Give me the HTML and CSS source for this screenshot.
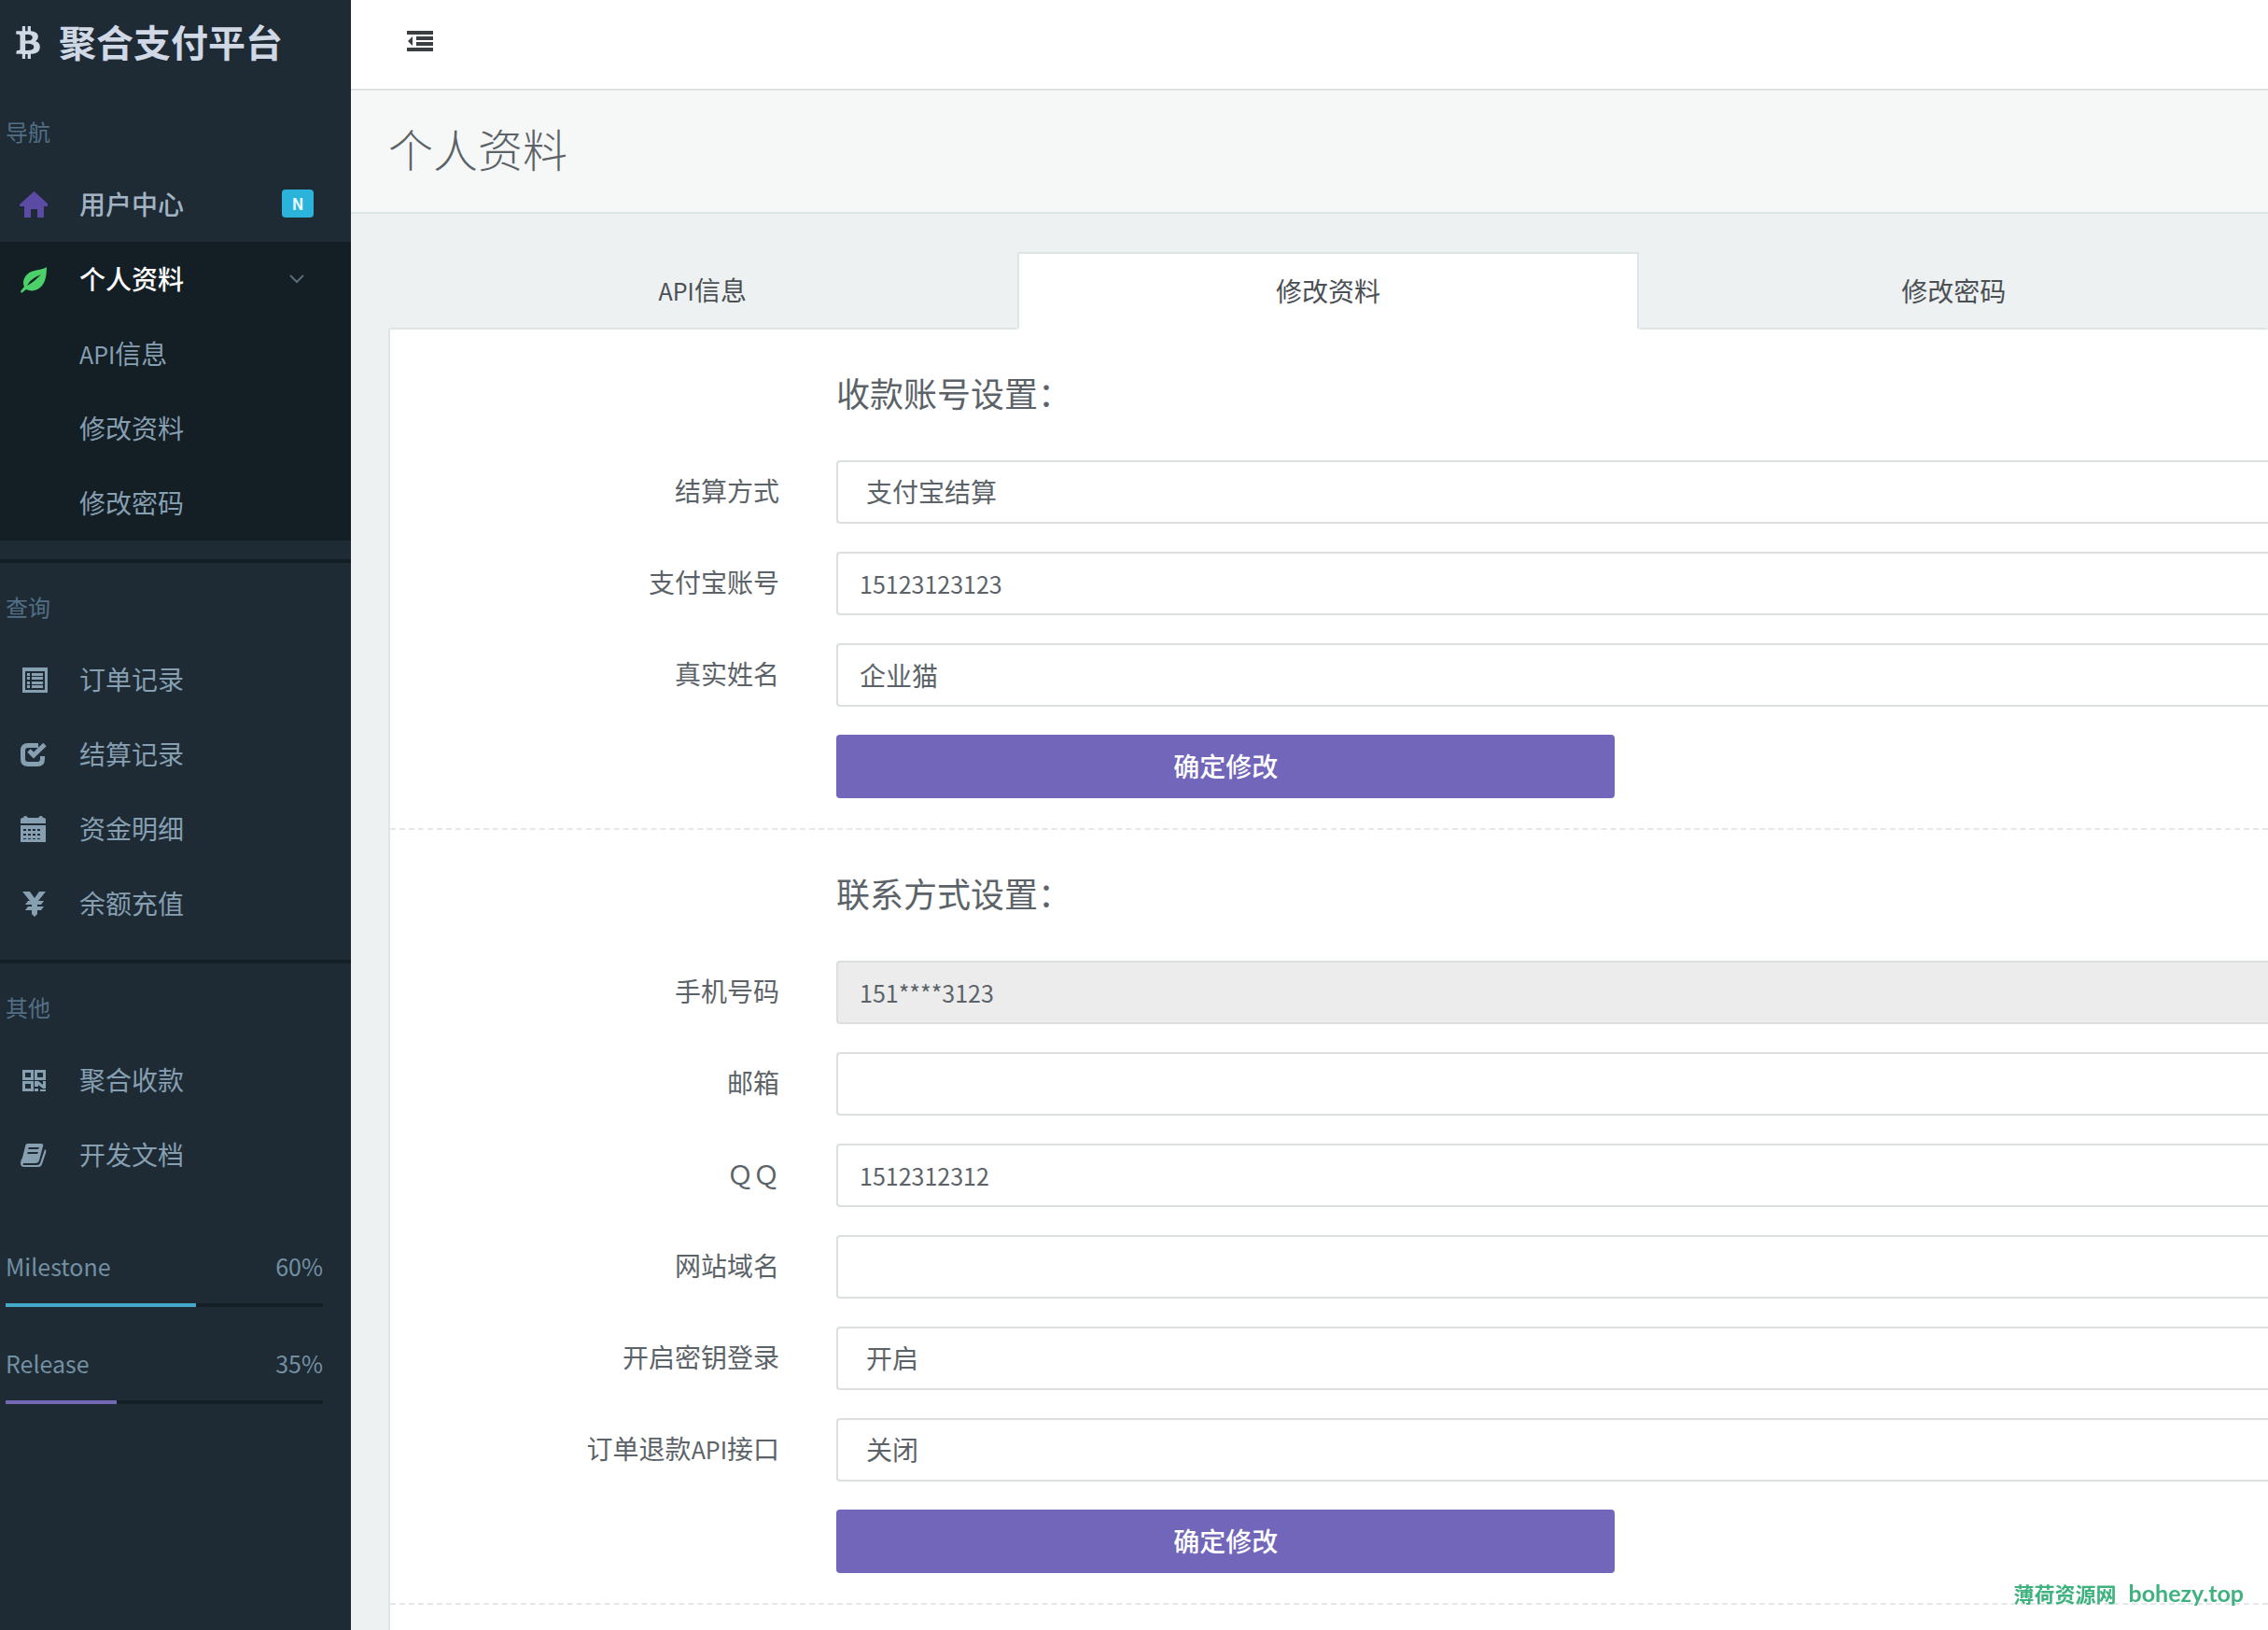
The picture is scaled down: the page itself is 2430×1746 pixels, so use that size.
FILE: index.html
```html
<!DOCTYPE html>
<html lang="zh-CN">
<head>
<meta charset="utf-8">
<title>聚合支付平台 - 个人资料</title>
<link rel="stylesheet" href="styles.css">
</head>
<body>
<div class="app">
  <aside class="sidebar">
    <a class="brand" href="#">
      <svg class="brand-icon" viewBox="224 0 1232 1792" aria-hidden="true"><path d="M1351 651q18 182-131 258 117 28 175 103t45 214q-7 71-32.500 125t-64.500 89-97 58.500-121.500 34.500-145.500 15v255h-154v-251q-80 0-122-1v252h-154v-255q-18 0-54-.5t-55-.5h-200l31-183h111q50 0 58-51v-402h16q-6-1-16-1v-287q-13-68-89-68h-111v-164l212 1q64 0 97-1v-252h154v247q82-2 122-2v-245h154v252q79 7 140 22.500t113 45 82.500 78 36.500 114.500zm-215 545q0-36-15-64t-37-46-57.500-30.500-65.500-18.500-74-9-69-3-64.500 1-47.500 1v338q8 0 37 .5t48 .5 53-1.500 58.500-4 57-8.500 55.500-14 47.500-21 39.500-30 24.500-40 9.500-51zm-71-476q0-33-12.500-58.500t-30.500-42-48-28-55-16.500-61.500-8-58-2.500-54 1-39.500.5v307q5 0 34.500.5t46.500 0 50-2 55-5.500 51.500-11 48.500-18.500 37-27 27-38.500 9-51z"/></svg>
      <span>聚合支付平台</span>
    </a>
    <nav class="nav">
      <h2 class="nav-heading">导航</h2>
      <ul class="nav-list">
        <li><a class="nav-link strong" href="#">
          <svg class="nav-icon home" viewBox="0 0 30 30" aria-hidden="true"><path d="M15.500 0 0 14v2h5v12h7v-9h7v9h7V16h5v-2z"/></svg>
          <span>用户中心</span><b class="badge">N</b></a></li>
        <li class="open">
          <a class="nav-link strong" href="#">
            <svg class="nav-icon leaf" viewBox="0 0 30 30" aria-hidden="true"><path d="M29 1C24 5 14 3 8 9c-4 4-5 9-3 13L1 27l1 2 5-4c6 3 13 1 17-4 4-5 5-12 5-20zM8 21C11 15 16 12 23 9c-5 5-9 9-15 12z"/></svg>
            <span>个人资料</span>
            <svg class="chevron" viewBox="0 0 18 18" aria-hidden="true"><path d="m2 5 7 7 7-7"/></svg>
          </a>
          <ul class="nav-list">
            <li><a class="nav-link sub" href="#"><span><span class="latin">API</span>信息</span></a></li>
            <li><a class="nav-link sub" href="#">修改资料</a></li>
            <li><a class="nav-link sub" href="#">修改密码</a></li>
          </ul>
        </li>
      </ul>
      <hr class="nav-rule">
      <h2 class="nav-heading">查询</h2>
      <ul class="nav-list">
        <li><a class="nav-link" href="#">
          <svg class="nav-icon" viewBox="0 0 30 30" aria-hidden="true"><path fill-rule="evenodd" d="M3 1h27v27H3zM6 5v20h21V5z"/><path d="M8 7h3v3H8zm5 0h12v3H13zM8 11h3v3H8zm5 0h12v3H13zM8 16h3v3H8zm5 0h12v3H13zM8 20h3v3H8zm5 0h12v3H13z"/></svg>
          <span>订单记录</span></a></li>
        <li><a class="nav-link" href="#">
          <svg class="nav-icon" viewBox="0 0 30 30" aria-hidden="true"><g fill="none" stroke="currentColor"><path stroke-width="5" d="M20 4.500H9Q3.500 4.500 3.500 10v9q0 5.500 5.500 5.500h10q5.500 0 5.500-5.500v-3"/><path stroke-width="5" d="m10 10 5 5L27 3.500"/></g></svg>
          <span>结算记录</span></a></li>
        <li><a class="nav-link" href="#">
          <svg class="nav-icon" viewBox="0 0 30 30" aria-hidden="true"><path d="M1 8V4q0-2 2-2h1q0-2 2-2t3 2h11q1-2 3-2t2 2h1q2 0 2 2v4z"/><path fill-rule="evenodd" d="M1 10h27v18H1zM4 14v2h3v-2zm5 0v2h3v-2zm5 0v2h3v-2zm5 0v2h3v-2zM4 19v2h3v-2zm5 0v2h3v-2zm5 0v2h3v-2zm5 0v2h3v-2zM4 24v1h3v-1zm5 0v1h3v-1zm5 0v1h3v-1zm5 0v1h3v-1z"/></svg>
          <span>资金明细</span></a></li>
        <li><a class="nav-link" href="#">
          <svg class="nav-icon" viewBox="0 0 30 30" aria-hidden="true"><path d="M3 1h8l5 7 5-7h7l-8 10h6l-3 4h-4v2h7l-3 4h-4v4l-3 3-3-3v-4H6l3-4h4v-2H6l3-4h2z"/></svg>
          <span>余额充值</span></a></li>
      </ul>
      <hr class="nav-rule">
      <h2 class="nav-heading">其他</h2>
      <ul class="nav-list">
        <li><a class="nav-link" href="#">
          <svg class="nav-icon" viewBox="0 0 30 30" aria-hidden="true"><path fill-rule="evenodd" d="M3 3h12v11H3zM6 6v5h6V6zM16 3h12v11H16zM19 6v5h6V6zM3 15h12v11H3zM6 18v5h6v-5z"/><path d="M16 15h4l5 4v-4h3v8h-3l-5-4v2h-4zM16 23h4v3h-4zM22 24h6v2h-6z"/></svg>
          <span>聚合收款</span></a></li>
        <li><a class="nav-link" href="#">
          <svg class="nav-icon" viewBox="0 0 30 30" aria-hidden="true"><path fill-rule="evenodd" d="M8 2h15q3 0 2 3l-4 15q-1 3-4 3H4q-1 2 1 2h14q2 0 3-2l5-15q2 1 1 4l-4 12q-1 3-4 3H5q-4 0-4-4 0-3 2-6L6 5q0-2 2-3zm2 4-1 2h11l1-2zM9 11l-1 2h11l1-2z"/></svg>
          <span>开发文档</span></a></li>
      </ul>
    </nav>
    <div class="meters">
      <div class="meter">
        <div class="meter-label"><span>Milestone</span><span>60%</span></div>
        <div class="meter-track"><div class="meter-fill info" style="width:60%"></div></div>
      </div>
      <div class="meter">
        <div class="meter-label"><span>Release</span><span>35%</span></div>
        <div class="meter-track"><div class="meter-fill primary" style="width:35%"></div></div>
      </div>
    </div>
  </aside>

  <main class="main">
    <header class="topbar">
      <button class="toggle" type="button" aria-label="收起菜单">
        <svg viewBox="0 0 28 24" aria-hidden="true"><path d="M0 1h28v4H0zM10 7h18v4H10zM10 13h18v4H10zM0 19h28v4H0zM1 12l5-5v10z"/></svg>
      </button>
    </header>
    <div class="page-title"><h1>个人资料</h1></div>
    <div class="content">
      <nav class="tabs">
        <a class="tab" href="#"><span><span class="latin">API</span>信息</span></a>
        <a class="tab active" href="#">修改资料</a>
        <a class="tab" href="#">修改密码</a>
      </nav>
      <div class="panel">
        <form class="section">
          <h2 class="section-title">收款账号设置：</h2>
          <label for="settle">结算方式</label>
          <select class="control" id="settle"><option>支付宝结算</option></select>
          <label for="account">支付宝账号</label>
          <input class="control latin" id="account" type="text" value="15123123123">
          <label for="name">真实姓名</label>
          <input class="control" id="name" type="text" value="企业猫">
          <button class="submit" type="button">确定修改</button>
        </form>
        <form class="section">
          <h2 class="section-title">联系方式设置：</h2>
          <label for="phone">手机号码</label>
          <input class="control latin" id="phone" type="text" value="151****3123" disabled>
          <label for="mail">邮箱</label>
          <input class="control latin" id="mail" type="text">
          <label for="qq">ＱＱ</label>
          <input class="control latin" id="qq" type="text" value="1512312312">
          <label for="site">网站域名</label>
          <input class="control latin" id="site" type="text">
          <label for="keylogin">开启密钥登录</label>
          <select class="control" id="keylogin"><option>开启</option></select>
          <label for="refund">订单退款<span class="latin">API</span>接口</label>
          <select class="control" id="refund"><option>关闭</option></select>
          <button class="submit" type="button">确定修改</button>
        </form>
      </div>
    </div>
  </main>
</div>
<div class="watermark"><span>薄荷资源网</span><span class="watermark-site">bohezy.top</span></div>
</body>
</html>
```
FILE: styles.css
```css
* { box-sizing: border-box; }

body {
  margin: 0;
  font-family: "Noto Sans CJK SC", "Noto Sans", sans-serif;
  font-size: 28px;
  line-height: 40px;
  color: #5c6368;
  background: #edf1f2;
}

a { color: inherit; text-decoration: none; }
h1, h2, ul { margin: 0; padding: 0; font-weight: 400; }
ul { list-style: none; }
button, input, select { font: inherit; color: inherit; }

.latin { font-size: 25px; }

.app { display: flex; min-height: 100vh; }

/* Sidebar */
.sidebar {
  flex: none;
  width: 376px;
  background: #1e2b35;
  color: #869fb1;
}

.brand {
  display: flex;
  align-items: center;
  gap: 19px;
  height: 94px;
  padding: 0 0 6px 16px;
  font-size: 40px;
  font-weight: 700;
  color: #cfd8e4;
}
.brand-icon { width: 28px; height: 38px; fill: currentColor; }

.nav-heading {
  height: 85px;
  padding: 27px 6px 0;
  font-size: 24px;
  color: #526f85;
}

.nav-link {
  display: flex;
  align-items: center;
  height: 80px;
  padding: 0 40px 2px 21px;
}
.nav-link.strong { font-weight: 500; color: #a2b3c3; }
.nav-link.sub { padding-left: 85px; }
.nav-icon { width: 30px; height: 30px; margin: 4px 34px 0 0; fill: currentColor; }
.nav-icon.home { color: #5c4ba4; }
.nav-icon.leaf { color: #4bd06a; }

.open { background: #131e25; }
.open > .nav-link.strong { color: #fff; }

.badge {
  width: 34px;
  margin-left: auto;
  border-radius: 4px;
  background: #2bb3dc;
  color: #e8fbff;
  font-size: 17px;
  line-height: 30px;
  text-align: center;
}
.chevron {
  width: 18px;
  height: 18px;
  margin: 2px 9px 0 auto;
  fill: none;
  stroke: #5a6b78;
  stroke-width: 2;
}

.nav-rule {
  height: 4px;
  margin: 20px 0 0;
  border: 0;
  background: #131e25;
}

.meters {
  display: grid;
  gap: 40px;
  padding: 59px 30px 60px 6px;
}
.meter-label {
  display: flex;
  justify-content: space-between;
  font-size: 25px;
  color: #7390a2;
}
.meter-track { height: 4px; margin-top: 20px; background: #131e25; }
.meter-fill { height: 4px; }
.meter-fill.info { background: #45a9ca; }
.meter-fill.primary { background: #7468b4; }

/* Main column */
.main { flex: 1; min-width: 0; display: flex; flex-direction: column; }

.topbar {
  display: flex;
  align-items: center;
  height: 97px;
  padding: 0 60px 8px;
  background: #fff;
  border-bottom: 2px solid #dee2e4;
}
.toggle { display: flex; padding: 0; border: 0; background: none; color: #3a3f44; }
.toggle svg { width: 28px; height: 24px; fill: currentColor; }

.page-title {
  padding: 26px 40px 34px;
  background: #f6f8f8;
  border-bottom: 2px solid #dee5e7;
}
.page-title h1 { font-size: 48px; font-weight: 300; line-height: 70px; }

.content { flex: 1; display: flex; flex-direction: column; padding: 41px 0 0 40px; }

.tabs { display: grid; grid-template-columns: 1.01fr 1fr 1.01fr; }
.tab {
  display: flex;
  align-items: center;
  justify-content: center;
  height: 83px;
  padding-bottom: 2px;
  border: 2px solid transparent;
  border-bottom-color: #dee5e7;
  color: #4c5054;
}
.tab.active {
  background: #fff;
  border-color: #dee5e7;
  border-bottom-color: #fff;
}

.panel { flex: 1; background: #fff; border-left: 2px solid #dee5e7; }

.section {
  display: grid;
  grid-template-columns: 417px minmax(0, 1fr);
  gap: 30px 61px;
  padding-bottom: 32px;
  border-bottom: 2px dashed #e4e8ea;
}
.section-title {
  grid-column: 2;
  padding: 42px 0 18px;
  font-size: 36px;
  line-height: 50px;
}
.section label { text-align: right; padding: 12px 0; }

.control {
  width: 100%;
  height: 68px;
  padding: 0 23px;
  border: 2px solid #dcdfe0;
  border-right: 0;
  border-radius: 4px 0 0 4px;
  background: #fff;
  appearance: none;
}
select.control { padding: 0 30px 2px; }
.control:disabled { background: #ececec; color: #5c6368; }

.submit {
  grid-column: 2;
  width: 54.4%;
  height: 68px;
  padding: 0 0 2px;
  border: 0;
  border-radius: 4px;
  background: #7266ba;
  color: #fff;
  font-weight: 500;
}

.watermark {
  position: fixed;
  right: 26px;
  bottom: 24px;
  display: flex;
  gap: 13px;
  align-items: baseline;
  font-size: 22px;
  font-weight: 700;
  line-height: 32px;
  color: #3fb27f;
}
.watermark-site { font-family: Lato, sans-serif; font-size: 25px; }
```
